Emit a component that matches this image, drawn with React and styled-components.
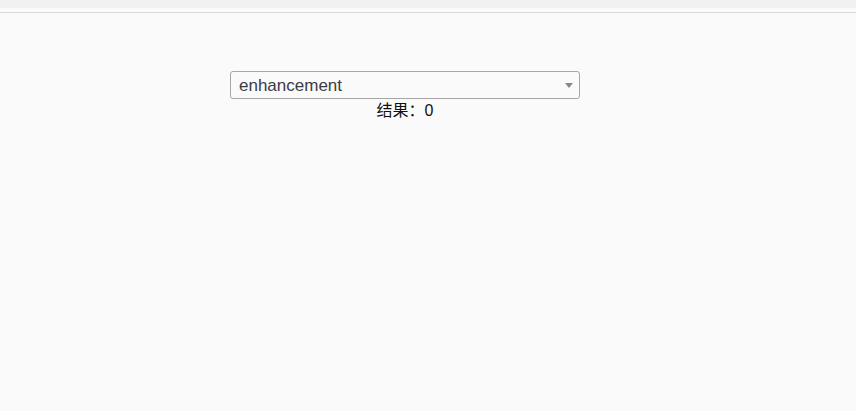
import styled, { createGlobalStyle } from "styled-components";

const GlobalStyle = createGlobalStyle`
  html, body {
    margin: 0;
    padding: 0;
    background: #fafafa;
    font-family: "Liberation Sans", "Noto Sans CJK SC", sans-serif;
  }
`;

const TopStrip = styled.div`
  height: 8px;
  background: #f0f1f2;
`;

const TopRule = styled.div`
  height: 4px;
  background: #fafafa;
  border-bottom: 1px solid #d9d9d9;
`;

const Main = styled.main`
  display: flex;
  flex-direction: column;
  align-items: center;
  width: 350px;
  padding: 58px 0 0 230px;
`;

const SelectBox = styled.div`
  box-sizing: border-box;
  width: 350px;
  height: 28px;
  display: flex;
  align-items: center;
  justify-content: space-between;
  padding: 1px 6px 0 8px;
  border: 1px solid #a6a6a6;
  border-radius: 3px;
  background: #fafafa;
  color: #3a3a48;
  font-size: 17px;
  cursor: pointer;
`;

const Caret = styled.span`
  width: 0;
  height: 0;
  border-left: 4px solid transparent;
  border-right: 4px solid transparent;
  border-top: 5px solid #888;
`;

const Result = styled.div`
  margin-top: 1px;
  font-size: 16px;
  line-height: 21px;
  color: #111;
`;

export default function App() {
  return (
    <>
      <GlobalStyle />
      <TopStrip />
      <TopRule />
      <Main>
        <SelectBox>
          enhancement
          <Caret />
        </SelectBox>
        <Result>结果：0</Result>
      </Main>
    </>
  );
}
